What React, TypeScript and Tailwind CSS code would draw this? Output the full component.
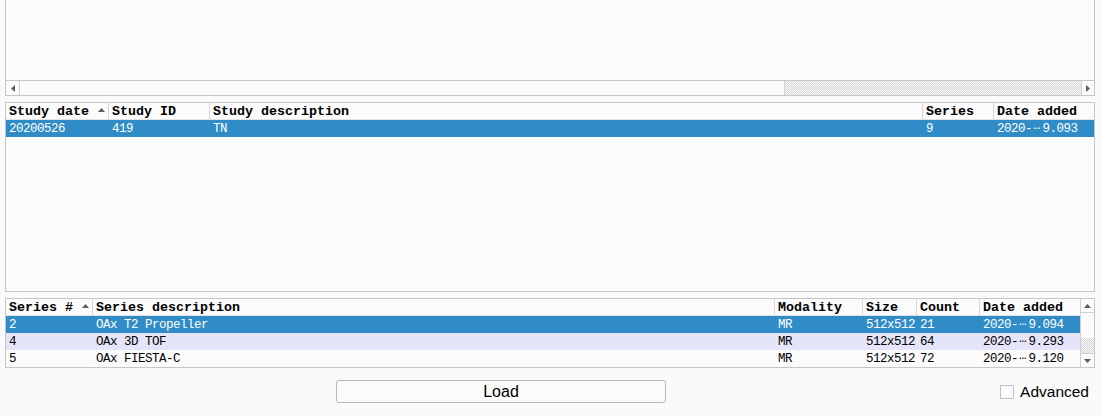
import React from 'react';

const mono = "font-['Liberation_Mono','DejaVu_Sans_Mono',monospace]";
const sans = "font-['Liberation_Sans',Arial,sans-serif]";
const dither =
  'bg-[repeating-conic-gradient(#d9d9d9_0_25%,#f6f6f6_0_50%)] bg-[length:2px_2px]';

const Tri: React.FC<{ dir: 'up' | 'down' | 'left' | 'right'; className?: string }> = ({ dir, className }) => {
  const pts = {
    up: '0,4 3.5,0 7,4',
    down: '0,0 3.5,4 7,0',
    left: '4,0 0,3.5 4,7',
    right: '0,0 4,3.5 0,7',
  }[dir];
  const vertical = dir === 'up' || dir === 'down';
  return (
    <svg
      width={vertical ? 7 : 4}
      height={vertical ? 4 : 7}
      viewBox={vertical ? '0 0 7 4' : '0 0 4 7'}
      className={className}
    >
      <polygon points={pts} fill="#5c5c5c" />
    </svg>
  );
};

// midline ellipsis, like the bitmap font in the reference
const Ellip = () => <span className="relative -top-[3px] tracking-[1px] mx-[1px]">…</span>;

type Col = { label: string; sort?: boolean };

const HeaderRow: React.FC<{ cols: Col[]; grid: string }> = ({ cols, grid }) => (
  <div className={`grid ${grid} h-[17px] border-b border-[#e2e2e2]`}>
    {cols.map((c, i) => (
      <div
        key={c.label}
        className={`relative flex items-center pt-[1px] px-[3px] text-[13.33px] font-bold text-black leading-none whitespace-nowrap ${
          i < cols.length - 1 ? 'border-r border-[#d6d6d6]' : ''
        }`}
      >
        {c.label}
        {c.sort && <Tri dir="up" className="absolute right-[3px] top-[5px]" />}
      </div>
    ))}
  </div>
);

const DataRow: React.FC<{ cells: React.ReactNode[]; grid: string; tone: 'sel' | 'alt' | 'plain' }> = ({
  cells,
  grid,
  tone,
}) => {
  const bg = tone === 'sel' ? 'bg-[#308cc6] text-white' : tone === 'alt' ? 'bg-[#e5e5f9] text-black' : 'text-black';
  return (
    <div className={`grid ${grid} h-[17px] ${bg}`}>
      {cells.map((c, i) => (
        <div
          key={i}
          className="flex items-center pt-[1px] px-[3px] text-[12.5px] tracking-[-0.5px] leading-none whitespace-nowrap"
        >
          {c}
        </div>
      ))}
    </div>
  );
};

const studyGrid = 'grid-cols-[103px_101px_713px_71px_100px]';
const seriesGrid = 'grid-cols-[87px_682px_88px_54px_63px_100px]';

const date = (tail: string) => (
  <>
    2020-<Ellip />
    {tail}
  </>
);

const series = [
  { n: '2', d: 'OAx T2 Propeller', c: '21', t: '9.094', tone: 'sel' as const },
  { n: '4', d: 'OAx 3D TOF', c: '64', t: '9.293', tone: 'alt' as const },
  { n: '5', d: 'OAx FIESTA-C', c: '72', t: '9.120', tone: 'plain' as const },
];

export default function App() {
  return (
    <div className={`w-[1102px] h-[416px] bg-[#fafafa] pl-[5px] pr-[7px] flex flex-col ${mono}`}>
      {/* top panel, cut at the top of the window */}
      <div className="h-[96px] border-x border-b border-[#c6c6c6] bg-[#fbfbfb] flex flex-col">
        <div className="h-[80px]" />
        <div className="h-[15px] border-t border-[#c6c6c6] flex">
          <div className="w-[14px] border-r border-[#d0d0d0] flex items-center justify-center">
            <Tri dir="left" />
          </div>
          <div className="flex-1" />
          <div className={`w-[297px] border-l border-[#d0d0d0] ${dither}`} />
          <div className="w-[13px] border-l border-[#d0d0d0] flex items-center justify-center">
            <Tri dir="right" />
          </div>
        </div>
      </div>

      {/* studies */}
      <div className="mt-[6px] h-[190px] border border-[#c6c6c6] bg-[#fbfbfb]">
        <HeaderRow
          grid={studyGrid}
          cols={[
            { label: 'Study date', sort: true },
            { label: 'Study ID' },
            { label: 'Study description' },
            { label: 'Series' },
            { label: 'Date added' },
          ]}
        />
        <DataRow grid={studyGrid} tone="sel" cells={['20200526', '419', 'TN', '9', date('9.093')]} />
      </div>

      {/* series */}
      <div className="mt-[6px] h-[70px] border border-[#c6c6c6] bg-[#fbfbfb] flex">
        <div className="w-[1074px]">
          <HeaderRow
            grid={seriesGrid}
            cols={[
              { label: 'Series #', sort: true },
              { label: 'Series description' },
              { label: 'Modality' },
              { label: 'Size' },
              { label: 'Count' },
              { label: 'Date added' },
            ]}
          />
          {series.map((s) => (
            <DataRow
              key={s.n}
              grid={seriesGrid}
              tone={s.tone}
              cells={[s.n, s.d, 'MR', '512x512', s.c, date(s.t)]}
            />
          ))}
        </div>
        <div className="w-[14px] border-l border-[#d0d0d0] flex flex-col">
          <div className="h-[14px] border-b border-[#d0d0d0] flex items-center justify-center">
            <Tri dir="up" />
          </div>
          <div className="flex-1" />
          <div className={`h-[15px] ${dither}`} />
          <div className="h-[14px] border-t border-[#d0d0d0] flex items-center justify-center">
            <Tri dir="down" />
          </div>
        </div>
      </div>

      {/* actions */}
      <div className={`mt-[12px] h-[23px] flex items-center ${sans}`}>
        <button className="ml-[331px] w-[330px] h-[23px] border border-[#b8b8b8] rounded-[3px] bg-[#fbfbfb] text-[16px] text-black leading-none">
          Load
        </button>
        <label className="ml-auto mr-[6px] flex items-center gap-[6px] text-[15.5px] text-black leading-none">
          <span className="w-[14px] h-[14px] border border-[#c2c2c2] bg-[#fbfbfb]" />
          Advanced
        </label>
      </div>
    </div>
  );
}
